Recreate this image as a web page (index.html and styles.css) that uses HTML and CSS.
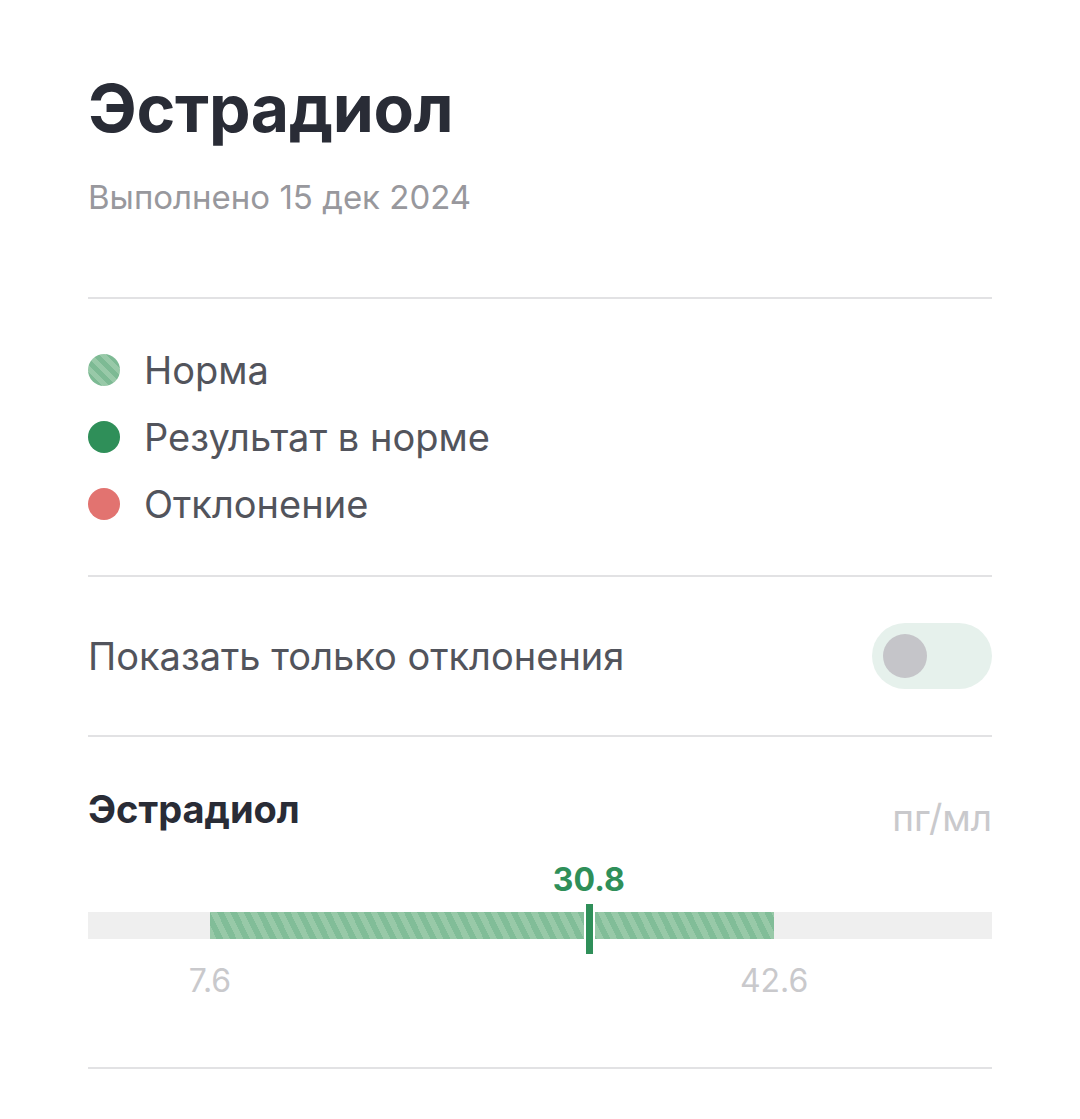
FILE: index.html
```html
<!DOCTYPE html>
<html lang="ru">

<head>
    <meta charset="UTF-8">
    <meta name="viewport" content="width=device-width, initial-scale=1.0">
    <title>Эстрадиол</title>
    <link rel="stylesheet" href="styles.css">
</head>

<body>

    <div class="page">
        <header class="head">
            <h1 class="title">Эстрадиол</h1>
            <div class="date">Выполнено 15 дек 2024</div>
        </header>

        <ul class="legend">
            <li><span class="dot dot-norm"></span>Норма</li>
            <li><span class="dot dot-ok"></span>Результат в норме</li>
            <li><span class="dot dot-bad"></span>Отклонение</li>
        </ul>

        <div class="filter">
            <span>Показать только отклонения</span>
            <div class="switch"><span class="knob"></span></div>
        </div>

        <section class="result">
            <div class="result-head">
                <h2>Эстрадиол</h2>
                <span class="unit">пг/мл</span>
            </div>

            <div class="scale">
                <!-- range and value are placed by percent of bar width -->
                <div class="value" style="left: 55.4%;">30.8</div>
                <div class="bar">
                    <div class="range" style="left: 13.5%; width: 62.4%;"></div>
                    <div class="marker" style="left: 55.4%;"></div>
                </div>
                <div class="ticks">
                    <span style="left: 13.5%;">7.6</span>
                    <span style="left: 75.9%;">42.6</span>
                </div>
            </div>
        </section>
    </div>

</body>

</html>
```

FILE: styles.css
```css
body {
    font-family: 'Inter', 'Noto Sans', sans-serif;
    margin: 0;
    padding: 0;
    background-color: #fff;
    color: #292c36;
}

.page {
    padding: 68px 88px 0;
}

.head {
    padding-bottom: 80px;
    border-bottom: 2px solid #e2e2e4;
}

.title {
    margin: 0;
    font-size: 66px;
    line-height: 80px;
    font-weight: 700;
    letter-spacing: -0.3px;
}

.date {
    margin-top: 29px;
    font-size: 33px;
    line-height: 40px;
    color: #98989d;
}

.legend {
    list-style: none;
    margin: 0;
    padding: 37px 0 38px;
    border-bottom: 2px solid #e2e2e4;
}

.legend li {
    display: flex;
    align-items: center;
    height: 67px;
    font-size: 38px;
    color: #52545c;
}

.dot {
    width: 32px;
    height: 32px;
    border-radius: 50%;
    margin-right: 24px;
    flex-shrink: 0;
}

.dot-norm {
    background: repeating-linear-gradient(45deg, #98c9a8 0 5px, #7dba94 5px 10px);
}

.dot-ok {
    background-color: #2f8f59;
}

.dot-bad {
    background-color: #e27370;
}

.filter {
    display: flex;
    align-items: center;
    justify-content: space-between;
    height: 158px;
    font-size: 38px;
    color: #52545c;
    border-bottom: 2px solid #e2e2e4;
}

.switch {
    width: 120px;
    height: 66px;
    border-radius: 33px;
    background-color: #e6f1ec;
    display: flex;
    align-items: center;
    padding-left: 11px;
    box-sizing: border-box;
}

.knob {
    width: 44px;
    height: 44px;
    border-radius: 50%;
    background-color: #c5c5c9;
}

.result {
    padding-top: 50px;
    height: 280px;
    border-bottom: 2px solid #e2e2e4;
}

.result-head {
    display: flex;
    justify-content: space-between;
    align-items: flex-start;
}

.result-head h2 {
    margin: 0;
    font-size: 38px;
    line-height: 44px;
    font-weight: 700;
}

.unit {
    margin-top: 9px;
    font-size: 37px;
    line-height: 44px;
    color: #c9c9cc;
}

.scale {
    position: relative;
    margin-top: 20px;
}

.value {
    position: relative;
    display: inline-block;
    transform: translateX(-50%);
    font-size: 32px;
    line-height: 40px;
    font-weight: 700;
    color: #2f8f59;
}

.bar {
    position: relative;
    margin-top: 12px;
    height: 27px;
    background-color: #efefef;
}

.range {
    position: absolute;
    top: 0;
    bottom: 0;
    background: repeating-linear-gradient(64deg, #98c9a8 0 6px, #81bd98 6px 12px);
}

.marker {
    position: absolute;
    top: -8px;
    width: 7px;
    height: 50px;
    margin-left: -3px;
    background-color: #2f8f59;
    box-shadow: 0 0 0 2px #fff;
}

.ticks {
    position: relative;
    height: 60px;
    margin-top: 22px;
    font-size: 32px;
    line-height: 40px;
    color: #c9c9cc;
}

.ticks span {
    position: absolute;
    top: 0;
    transform: translateX(-50%);
}
```
